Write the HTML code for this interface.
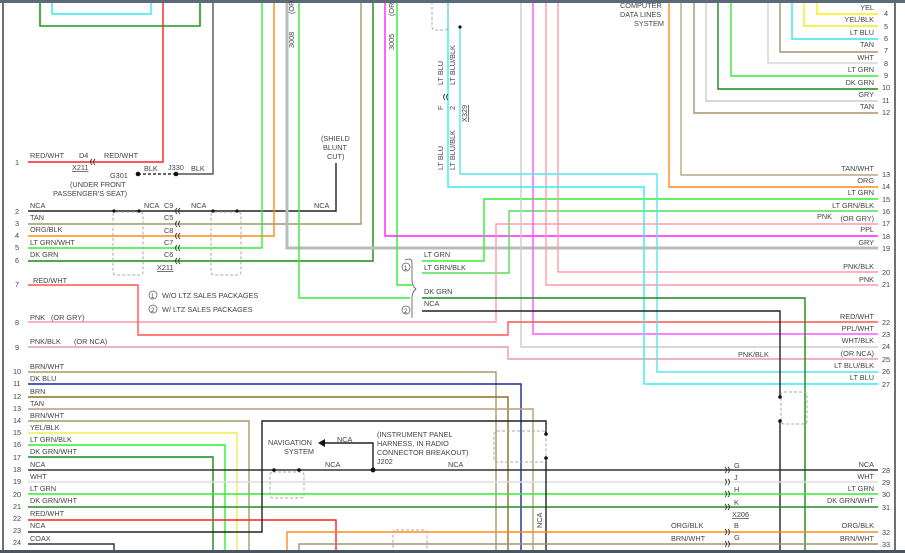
<!DOCTYPE html><html><head><meta charset="utf-8"><style>
html,body{margin:0;padding:0;background:#fff}
svg{display:block}
text{font-family:"Liberation Sans",sans-serif;font-size:7.3px;fill:#444}
</style></head><body>
<svg width="905" height="553" viewBox="0 0 905 553" xmlns="http://www.w3.org/2000/svg">
<defs>
<path id="cl" d="M3 -3Q0 0 3 3M6 -3Q3 0 6 3" fill="none" stroke="#333" stroke-width="0.9"/>
<path id="cr" d="M0 -3Q3 0 0 3M3 -3Q6 0 3 3" fill="none" stroke="#333" stroke-width="0.9"/>
</defs>
<rect width="905" height="553" fill="#fff"/>
<g fill="none" stroke-width="1.4">
<path d="M52 0V14H151V0" stroke="#33e6ee"/>
<path d="M40 0V26H200V0" stroke="#1a9a1a" stroke-width="1.6"/>
<path d="M28 162H163V0" stroke="#ff2020"/>
<path d="M176 174H213V0" stroke="#555"/>
<path d="M138 174H176" stroke="#333" stroke-dasharray="3 2"/>
<path d="M28 211H336V163" stroke="#222"/>
<path d="M28 224H361V0" stroke="#a8936a"/>
<path d="M28 236H274V0" stroke="#ff8c1a"/>
<path d="M28 248H262V0" stroke="#33ee33"/>
<path d="M28 261H373V0" stroke="#1a8a1a"/>
<path d="M287 0V248H878" stroke="#bbb" stroke-width="3"/>
<path d="M299 0V298H410" stroke="#33ee33"/>
<path d="M397 0V285H412" stroke="#33ee33"/>
<path d="M385 0V236H878" stroke="#ff22ff"/>
<path d="M817 0V14H878" stroke="#ffee00"/>
<path d="M804 0V26H878" stroke="#eeee22"/>
<path d="M792 0V39H878" stroke="#33e6ee"/>
<path d="M780 0V52H878" stroke="#a8936a"/>
<path d="M768 0V63H878" stroke="#ddd" stroke-width="1.8"/>
<path d="M731 0V76H878" stroke="#33ee33"/>
<path d="M718 0V89H878" stroke="#1a8a1a"/>
<path d="M706 0V101H878" stroke="#ccc"/>
<path d="M694 0V113H878" stroke="#a8936a"/>
<path d="M681 0V175H878" stroke="#b8a882"/>
<path d="M669 0V187H878" stroke="#ff8c1a"/>
<path d="M422 261H484V199H878" stroke="#33ee33"/>
<path d="M422 273H509V211H878" stroke="#55dd55"/>
<path d="M28 322H496V224H878" stroke="#ff99aa"/>
<path d="M558 0V272H878" stroke="#ff99aa"/>
<path d="M546 0V285H878" stroke="#ff99aa"/>
<path d="M533 0V334H878" stroke="#ff55ff"/>
<path d="M521 0V347H878" stroke="#ccc"/>
<path d="M28 285H138V335H508V322H878" stroke="#ff5555"/>
<path d="M28 347H508V359H878" stroke="#e99aa8"/>
<path d="M448 0V187H644V384H878" stroke="#33eeee"/>
<path d="M460 27V174H657V372H878" stroke="#55e6ee"/>
<path d="M422 298H805V553" stroke="#1a8a1a"/>
<path d="M422 311H780V398" stroke="#222"/>
<path d="M780 421V553" stroke="#222"/>
<path d="M28 372H496V553" stroke="#a89a6a"/>
<path d="M28 384H521V553" stroke="#1a2a99"/>
<path d="M28 397H508V553" stroke="#8b7020"/>
<path d="M28 409H533V553" stroke="#b8a070"/>
<path d="M28 421H249V553" stroke="#a89a6a"/>
<path d="M28 433H237V553" stroke="#eeee55"/>
<path d="M28 445H225V553" stroke="#33ee33"/>
<path d="M28 457H213V553" stroke="#1a8a1a"/>
<path d="M28 470H878" stroke="#333" stroke-width="1.6"/>
<path d="M28 482H878" stroke="#ddd" stroke-width="1.6"/>
<path d="M28 494H878" stroke="#33ee33"/>
<path d="M28 507H878" stroke="#2a8a2a"/>
<path d="M28 520H336V553" stroke="#ff2020"/>
<path d="M28 532H262V421H546V433" stroke="#222"/>
<path d="M546 458V553" stroke="#222"/>
<path d="M28 544H114V553" stroke="#333"/>
<path d="M287 553V532H878" stroke="#ff8c1a"/>
<path d="M299 553V544H878" stroke="#a8936a"/>
<path d="M373 470V443H325" stroke="#222"/>
<g stroke="#aaa" stroke-width="1" stroke-dasharray="3 2">
<rect x="113" y="212" width="30" height="63" rx="3"/>
<rect x="211" y="212" width="30" height="63" rx="3"/>
<rect x="432" y="0" width="16" height="30" rx="3"/>
<rect x="781" y="392" width="26" height="32" rx="3"/>
<rect x="494" y="431" width="52" height="31" rx="3"/>
<rect x="270" y="472" width="34" height="26" rx="3"/>
<rect x="393" y="530" width="34" height="26" rx="3"/>
</g>
<path d="M3 0V553" stroke="#333"/>
<path d="M895 0V553" stroke="#333"/>
<path d="M405 260Q412 257 412 263V280Q412 286 416 289Q412 292 412 298V318" stroke="#555" stroke-width="0.8"/>
</g>
<use href="#cl" x="89" y="162"/>
<use href="#cl" x="174" y="211"/><use href="#cl" x="174" y="224"/><use href="#cl" x="174" y="236"/><use href="#cl" x="174" y="248"/><use href="#cl" x="174" y="261"/>
<use href="#cr" x="725" y="470"/><use href="#cr" x="725" y="482"/><use href="#cr" x="725" y="494"/><use href="#cr" x="725" y="507"/><use href="#cr" x="725" y="532"/><use href="#cr" x="725" y="544"/>
<use href="#cl" x="442" y="97"/>
<rect x="0" y="0" width="905" height="3" fill="#5a6a7a"/>
<rect x="0" y="550" width="905" height="3" fill="#4a5560"/>
<g fill="#111">
<circle cx="176" cy="174" r="2.3"/><circle cx="138" cy="174" r="2.3"/>
<circle cx="114" cy="211" r="1.6"/><circle cx="139" cy="211" r="1.6"/><circle cx="213" cy="211" r="1.6"/><circle cx="237" cy="211" r="1.6"/>
<circle cx="460" cy="27" r="1.6"/><circle cx="780" cy="397" r="1.8"/><circle cx="780" cy="421" r="1.8"/>
<circle cx="546" cy="434" r="1.8"/><circle cx="546" cy="458" r="1.8"/>
<circle cx="274" cy="470" r="1.8"/><circle cx="299" cy="470" r="1.8"/><circle cx="373" cy="470" r="2.4"/>
<path d="M318 443L325 439V447Z"/>
</g>
<g>
<text x="30" y="158">RED/WHT</text><text x="79" y="158">D4</text><text x="104" y="158">RED/WHT</text>
<text x="72" y="170" text-decoration="underline">X211</text><text x="110" y="178">G301</text>
<text x="144" y="171">BLK</text><text x="168" y="170">J330</text><text x="191" y="171">BLK</text>
<text x="70" y="187">(UNDER FRONT</text><text x="53" y="196">PASSENGER'S SEAT)</text>
<text x="321" y="141">(SHIELD</text><text x="323" y="150">BLUNT</text><text x="327" y="159">CUT)</text>
<text x="30" y="208">NCA</text><text x="144" y="208">NCA</text><text x="164" y="208">C9</text><text x="191" y="208">NCA</text><text x="314" y="208">NCA</text>
<text x="30" y="220">TAN</text><text x="164" y="220">C5</text>
<text x="30" y="232">ORG/BLK</text><text x="164" y="233">C8</text>
<text x="30" y="245">LT GRN/WHT</text><text x="164" y="245">C7</text>
<text x="30" y="257">DK GRN</text><text x="164" y="257">C6</text><text x="157" y="270" text-decoration="underline">X211</text>
<text x="33" y="283">RED/WHT</text>
<text x="162" y="298">W/O LTZ SALES PACKAGES</text><text x="162" y="312">W/ LTZ SALES PACKAGES</text>
<circle cx="153" cy="295" r="4" fill="none" stroke="#555" stroke-width="0.7"/><text x="151" y="298" style="font-size:6px">1</text>
<circle cx="153" cy="309" r="4" fill="none" stroke="#555" stroke-width="0.7"/><text x="151" y="312" style="font-size:6px">2</text>
<circle cx="406" cy="267" r="4" fill="none" stroke="#555" stroke-width="0.7"/><text x="404" y="270" style="font-size:6px">1</text>
<circle cx="406" cy="310" r="4" fill="none" stroke="#555" stroke-width="0.7"/><text x="404" y="313" style="font-size:6px">2</text>
<text x="424" y="257">LT GRN</text><text x="424" y="270">LT GRN/BLK</text><text x="424" y="294">DK GRN</text><text x="424" y="306">NCA</text>
<text x="30" y="320">PNK</text><text x="51" y="320">(OR GRY)</text>
<text x="30" y="344">PNK/BLK</text><text x="74" y="344">(OR NCA)</text>
<text x="30" y="369">BRN/WHT</text><text x="30" y="381">DK BLU</text><text x="30" y="394">BRN</text><text x="30" y="406">TAN</text>
<text x="30" y="418">BRN/WHT</text><text x="30" y="430">YEL/BLK</text><text x="30" y="442">LT GRN/BLK</text><text x="30" y="454">DK GRN/WHT</text>
<text x="30" y="467">NCA</text><text x="30" y="479">WHT</text><text x="30" y="491">LT GRN</text><text x="30" y="503">DK GRN/WHT</text>
<text x="30" y="516">RED/WHT</text><text x="30" y="528">NCA</text><text x="30" y="541">COAX</text>
<text x="268" y="445">NAVIGATION</text><text x="284" y="454">SYSTEM</text>
<text x="337" y="442">NCA</text><text x="325" y="467">NCA</text><text x="448" y="467">NCA</text>
<text x="377" y="437">(INSTRUMENT PANEL</text><text x="377" y="446">HARNESS, IN RADIO</text><text x="377" y="455">CONNECTOR BREAKOUT)</text><text x="377" y="464">J202</text>
<text x="620" y="8">COMPUTER</text><text x="620" y="17">DATA LINES</text><text x="634" y="26">SYSTEM</text>
<text x="734" y="468">G</text><text x="734" y="480">J</text><text x="734" y="492">H</text><text x="734" y="505">K</text><text x="732" y="517" text-decoration="underline">X206</text>
<text x="734" y="528">B</text><text x="734" y="540">G</text>
<text x="671" y="528">ORG/BLK</text><text x="671" y="541">BRN/WHT</text><text x="738" y="357">PNK/BLK</text>
</g>
<g text-anchor="end">
<text x="874" y="10">YEL</text><text x="874" y="22">YEL/BLK</text><text x="874" y="35">LT BLU</text><text x="874" y="47">TAN</text>
<text x="874" y="60">WHT</text><text x="874" y="72">LT GRN</text><text x="874" y="85">DK GRN</text><text x="874" y="97">GRY</text><text x="874" y="109">TAN</text>
<text x="874" y="171">TAN/WHT</text><text x="874" y="183">ORG</text><text x="874" y="195">LT GRN</text><text x="874" y="208">LT GRN/BLK</text>
<text x="874" y="221">(OR GRY)</text><text x="832" y="219">PNK</text><text x="874" y="232">PPL</text><text x="874" y="245">GRY</text>
<text x="874" y="269">PNK/BLK</text><text x="874" y="282">PNK</text>
<text x="874" y="319">RED/WHT</text><text x="874" y="331">PPL/WHT</text><text x="874" y="343">WHT/BLK</text><text x="874" y="356">(OR NCA)</text>
<text x="874" y="368">LT BLU/BLK</text><text x="874" y="380">LT BLU</text>
<text x="874" y="467">NCA</text><text x="874" y="479">WHT</text><text x="874" y="491">LT GRN</text><text x="874" y="503">DK GRN/WHT</text>
<text x="874" y="528">ORG/BLK</text><text x="874" y="541">BRN/WHT</text>
</g>
<g>
<text x="884" y="16">4</text><text x="884" y="29">5</text><text x="884" y="41">6</text><text x="884" y="53">7</text><text x="884" y="66">8</text><text x="884" y="78">9</text>
<text x="882" y="90">10</text><text x="882" y="103">11</text><text x="882" y="115">12</text><text x="882" y="177">13</text><text x="882" y="189">14</text>
<text x="882" y="202">15</text><text x="882" y="214">16</text><text x="882" y="226">17</text><text x="882" y="239">18</text><text x="882" y="251">19</text>
<text x="882" y="275">20</text><text x="882" y="287">21</text><text x="882" y="325">22</text><text x="882" y="337">23</text><text x="882" y="349">24</text>
<text x="882" y="362">25</text><text x="882" y="374">26</text><text x="882" y="387">27</text><text x="882" y="473">28</text><text x="882" y="485">29</text>
<text x="882" y="497">30</text><text x="882" y="510">31</text><text x="882" y="535">32</text><text x="882" y="547">33</text>
<text x="15" y="165">1</text><text x="15" y="214">2</text><text x="15" y="226">3</text><text x="15" y="238">4</text><text x="15" y="250">5</text><text x="15" y="263">6</text>
<text x="15" y="287">7</text><text x="15" y="325">8</text><text x="15" y="350">9</text>
<text x="13" y="374">10</text><text x="13" y="386">11</text><text x="13" y="399">12</text><text x="13" y="411">13</text><text x="13" y="423">14</text><text x="13" y="435">15</text>
<text x="13" y="447">16</text><text x="13" y="460">17</text><text x="13" y="472">18</text><text x="13" y="484">19</text><text x="13" y="497">20</text><text x="13" y="509">21</text>
<text x="13" y="521">22</text><text x="13" y="533">23</text><text x="13" y="545">24</text>
</g>
<g style="font-size:7px">
<text transform="translate(294,48) rotate(-90)">3008</text><text transform="translate(294,14) rotate(-90)">(OR</text>
<text transform="translate(394,50) rotate(-90)">3005</text><text transform="translate(394,16) rotate(-90)">(OR</text>
<text transform="translate(443,85) rotate(-90)">LT BLU</text><text transform="translate(443,110) rotate(-90)">F</text>
<text transform="translate(443,170) rotate(-90)">LT BLU</text>
<text transform="translate(455,85) rotate(-90)">LT BLU/BLK</text><text transform="translate(455,110) rotate(-90)">2</text>
<text transform="translate(467,122) rotate(-90)" text-decoration="underline">X329</text>
<text transform="translate(455,170) rotate(-90)">LT BLU/BLK</text>
<text transform="translate(542,528) rotate(-90)">NCA</text>
</g>
</svg>
</body></html>
